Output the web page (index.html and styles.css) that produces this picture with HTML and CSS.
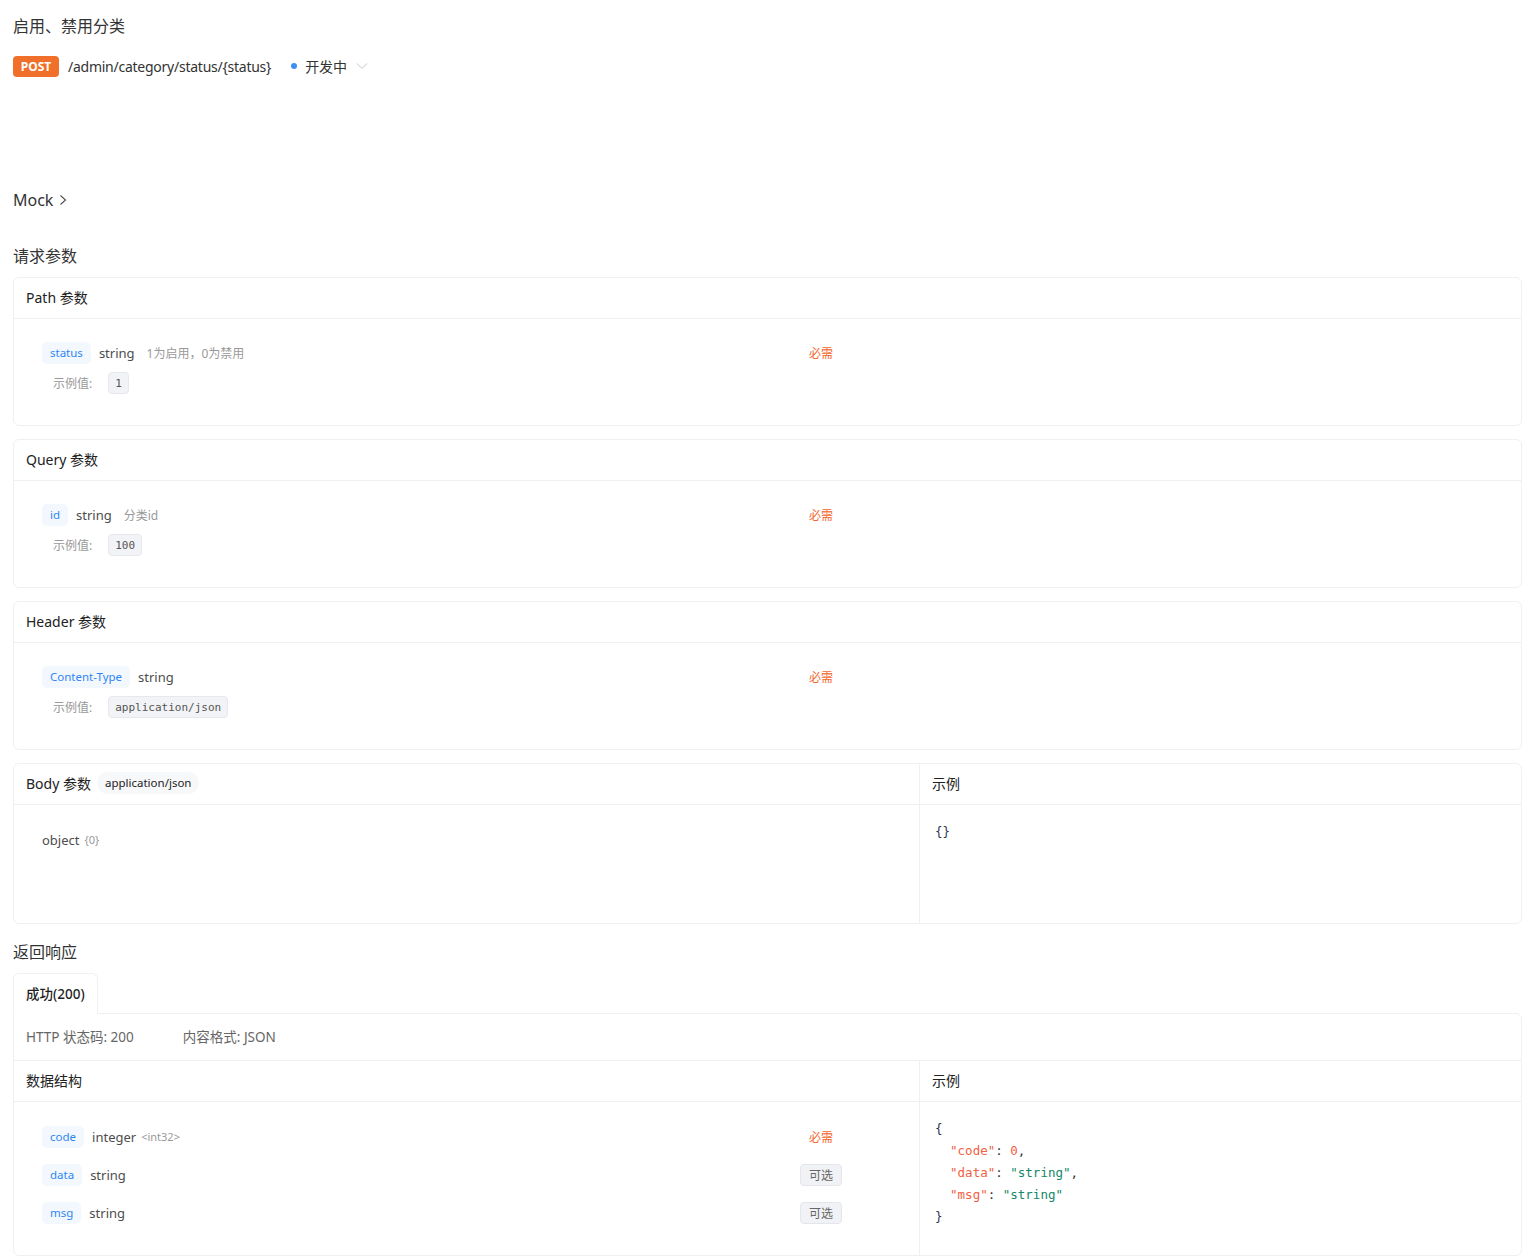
FILE: index.html
```html
<!DOCTYPE html>
<html lang="zh-CN">
<head>
<meta charset="utf-8">
<title>启用、禁用分类</title>
<link rel="stylesheet" href="styles.css">
</head>
<body>
<div class="page">
  <h1 class="api-title">启用、禁用分类</h1>
  <div class="api-line">
    <span class="method">POST</span>
    <span class="api-path">/admin/category/status/{status}</span>
    <span class="api-status"><span class="dot"></span>开发中
      <svg class="chev-down" width="12" height="8" viewBox="0 0 12 8"><polyline points="1,1.5 6,6.5 11,1.5" fill="none" stroke="#c4c7cc" stroke-width="1"/></svg>
    </span>
  </div>

  <div class="mock">Mock
    <svg class="chev-right" width="8" height="12" viewBox="0 0 8 12"><polyline points="1.5,1.5 6.5,6 1.5,10.5" fill="none" stroke="#555" stroke-width="1.2"/></svg>
  </div>

  <h2 class="section-title">请求参数</h2>

  <div class="card">
    <div class="card-head">Path 参数</div>
    <div class="card-body">
      <div class="param">
        <div class="param-main">
          <span class="name-tag">status</span>
          <span class="type">string</span>
          <span class="desc">1为启用，0为禁用</span>
          <span class="req">必需</span>
        </div>
        <div class="example"><span class="ex-label">示例值:</span><span class="ex-value">1</span></div>
      </div>
    </div>
  </div>

  <div class="card">
    <div class="card-head">Query 参数</div>
    <div class="card-body">
      <div class="param">
        <div class="param-main">
          <span class="name-tag">id</span>
          <span class="type">string</span>
          <span class="desc">分类id</span>
          <span class="req">必需</span>
        </div>
        <div class="example"><span class="ex-label">示例值:</span><span class="ex-value">100</span></div>
      </div>
    </div>
  </div>

  <div class="card">
    <div class="card-head">Header 参数</div>
    <div class="card-body">
      <div class="param">
        <div class="param-main">
          <span class="name-tag">Content-Type</span>
          <span class="type">string</span>
          <span class="req">必需</span>
        </div>
        <div class="example"><span class="ex-label">示例值:</span><span class="ex-value">application/json</span></div>
      </div>
    </div>
  </div>

  <div class="card split">
    <div class="col-left">
      <div class="card-head">Body 参数 <span class="ctype">application/json</span></div>
      <div class="body-left">
        <span class="type">object</span><span class="sub">{0}</span>
      </div>
    </div>
    <div class="col-right">
      <div class="card-head">示例</div>
      <pre class="code code-body"><span class="p">{}</span></pre>
    </div>
  </div>

  <h2 class="section-title resp-title">返回响应</h2>
  <div class="tabs"><span class="tab">成功(200)</span></div>
  <div class="panel">
    <div class="resp-meta">
      <span>HTTP 状态码: 200</span>
      <span>内容格式: JSON</span>
    </div>
    <div class="split resp-split">
      <div class="col-left">
        <div class="card-head">数据结构</div>
        <div class="resp-body">
          <div class="param-main">
            <span class="name-tag">code</span>
            <span class="type">integer</span>
            <span class="sub">&lt;int32&gt;</span>
            <span class="req">必需</span>
          </div>
          <div class="param-main">
            <span class="name-tag">data</span>
            <span class="type">string</span>
            <span class="opt">可选</span>
          </div>
          <div class="param-main">
            <span class="name-tag">msg</span>
            <span class="type">string</span>
            <span class="opt">可选</span>
          </div>
        </div>
      </div>
      <div class="col-right">
        <div class="card-head">示例</div>
<pre class="code code-resp"><span class="p">{</span>
  <span class="k">"code"</span><span class="c">: </span><span class="n">0</span><span class="c">,</span>
  <span class="k">"data"</span><span class="c">: </span><span class="s">"string"</span><span class="c">,</span>
  <span class="k">"msg"</span><span class="c">: </span><span class="s">"string"</span>
<span class="p">}</span></pre>
      </div>
    </div>
  </div>
</div>
</body>
</html>
```

FILE: styles.css
```css
* { box-sizing: border-box; }
html, body { margin: 0; padding: 0; background: #fff; }
body {
  font-family: "Noto Sans", "Noto Sans CJK SC", sans-serif;
  color: #333;
}
.page {
  padding: 14px 15px 0 13px;
}
.api-title {
  margin: 0;
  font-size: 16px;
  line-height: 24px;
  font-weight: 400;
  color: #333;
}
.api-line {
  display: flex;
  align-items: center;
  height: 21px;
  margin-top: 18px;
}
.method {
  display: inline-flex;
  align-items: center;
  justify-content: center;
  width: 46px;
  height: 21px;
  border-radius: 4px;
  background: #f0702b;
  color: #fff;
  font-size: 12px;
  font-weight: 700;
  padding-bottom: 1px;
}
.api-path {
  margin-left: 9px;
  font-size: 14px;
  letter-spacing: -0.25px;
  color: #333;
  padding-bottom: 1px;
}
.api-status {
  display: inline-flex;
  align-items: center;
  margin-left: 20px;
  font-size: 14px;
  color: #333;
  padding-bottom: 1px;
}
.dot {
  width: 6px;
  height: 6px;
  border-radius: 50%;
  background: #3b8ff5;
  margin-right: 8px;
}
.chev-down { margin-left: 9px; }
.mock {
  display: flex;
  align-items: center;
  margin-top: 111px;
  font-size: 16px;
  line-height: 24px;
  color: #333;
}
.chev-right { margin-left: 6px; }
.section-title {
  margin: 32px 0 9px;
  font-size: 16px;
  line-height: 24px;
  font-weight: 400;
  color: #333;
}
.card {
  border: 1px solid #eef0f3;
  border-radius: 6px;
  margin-bottom: 13px;
}
.card-head {
  height: 41px;
  padding: 0 12px 3px;
  display: flex;
  align-items: center;
  border-bottom: 1px solid #eef0f3;
  font-size: 14px;
  color: #222;
}
.card-body {
  padding: 23px 28px 31px;
}
.param { width: 800px; }
.param-main {
  display: flex;
  align-items: center;
  height: 22px;
  width: 800px;
}
.name-tag {
  display: inline-flex;
  align-items: center;
  height: 22px;
  padding: 0 8px 1px;
  border-radius: 5px;
  background: #f3f8ff;
  color: #2f86f2;
  font-size: 11.5px;
}
.type {
  margin-left: 8px;
  font-size: 13px;
  color: #4d4d4d;
  padding-bottom: 1px;
}
.desc {
  margin-left: 12px;
  font-size: 12px;
  color: #999;
  padding-bottom: 1px;
}
.sub {
  margin-left: 5px;
  font-size: 11px;
  color: #999;
  padding-bottom: 1px;
}
.req {
  margin-left: auto;
  width: 42px;
  text-align: center;
  font-size: 12px;
  color: #f5652d;
  padding-bottom: 1px;
}
.opt {
  margin-left: auto;
  display: inline-flex;
  align-items: center;
  justify-content: center;
  width: 42px;
  height: 22px;
  background: #f1f2f5;
  border: 1px solid #e4e6eb;
  border-radius: 4px;
  font-size: 12px;
  color: #666;
  padding-bottom: 1px;
}
.example {
  display: flex;
  align-items: center;
  margin-top: 8px;
  padding-left: 11px;
  height: 22px;
}
.ex-label {
  font-size: 12px;
  color: #999;
  margin-right: 16px;
  padding-bottom: 1px;
}
.ex-value {
  display: inline-flex;
  align-items: center;
  height: 22px;
  padding: 0 6px;
  background: #f2f3f6;
  border: 1px solid #e6e8ec;
  border-radius: 4px;
  font-family: "DejaVu Sans Mono", monospace;
  font-size: 11px;
  color: #555;
}
.split {
  display: grid;
  grid-template-columns: 905px 1fr;
}
.col-right { border-left: 1px solid #eef0f3; }
.ctype {
  display: inline-flex;
  align-items: center;
  height: 22px;
  margin-left: 6px;
  padding: 0 8px 1px;
  border-radius: 11px;
  background: #f7f8fa;
  font-size: 11.5px;
  color: #222;
}
.body-left {
  height: 118px;
  padding: 24px 28px 0;
  display: flex;
  align-items: flex-start;
  line-height: 22px;
}
.body-left .type { margin-left: 0; }
.code {
  margin: 0;
  font-family: "DejaVu Sans Mono", monospace;
  font-size: 12.5px;
  line-height: 22px;
  color: #333;
}
.code-body { padding: 16px 15px 0; height: 118px; }
.code .p { color: #2c3558; }
.code .k { color: #f2603f; }
.code .n { color: #f2603f; }
.code .s { color: #13876a; }
.code .c { color: #333; }
.resp-title { margin-top: 16px; margin-bottom: 9px; }
.tabs { display: flex; }
.tab {
  display: inline-flex;
  align-items: center;
  white-space: nowrap;
  height: 41px;
  padding: 0 12px 2px;
  border: 1px solid #eef0f3;
  border-bottom: 1px solid #fff;
  border-radius: 6px 6px 0 0;
  font-size: 13.5px;
  font-weight: 500;
  color: #1f1f1f;
  margin-bottom: -1px;
  background: #fff;
  position: relative;
  z-index: 1;
}
.panel {
  border: 1px solid #eef0f3;
  border-radius: 0 6px 6px 6px;
}
.resp-meta {
  height: 47px;
  display: flex;
  align-items: center;
  gap: 49px;
  padding: 0 12px 3px;
  border-bottom: 1px solid #eef0f3;
  font-size: 13.5px;
  color: #666;
}
.resp-body {
  padding: 24px 28px 31px;
  display: flex;
  flex-direction: column;
  gap: 16px;
}
.code-resp { padding: 16px 15px 0; }
```
